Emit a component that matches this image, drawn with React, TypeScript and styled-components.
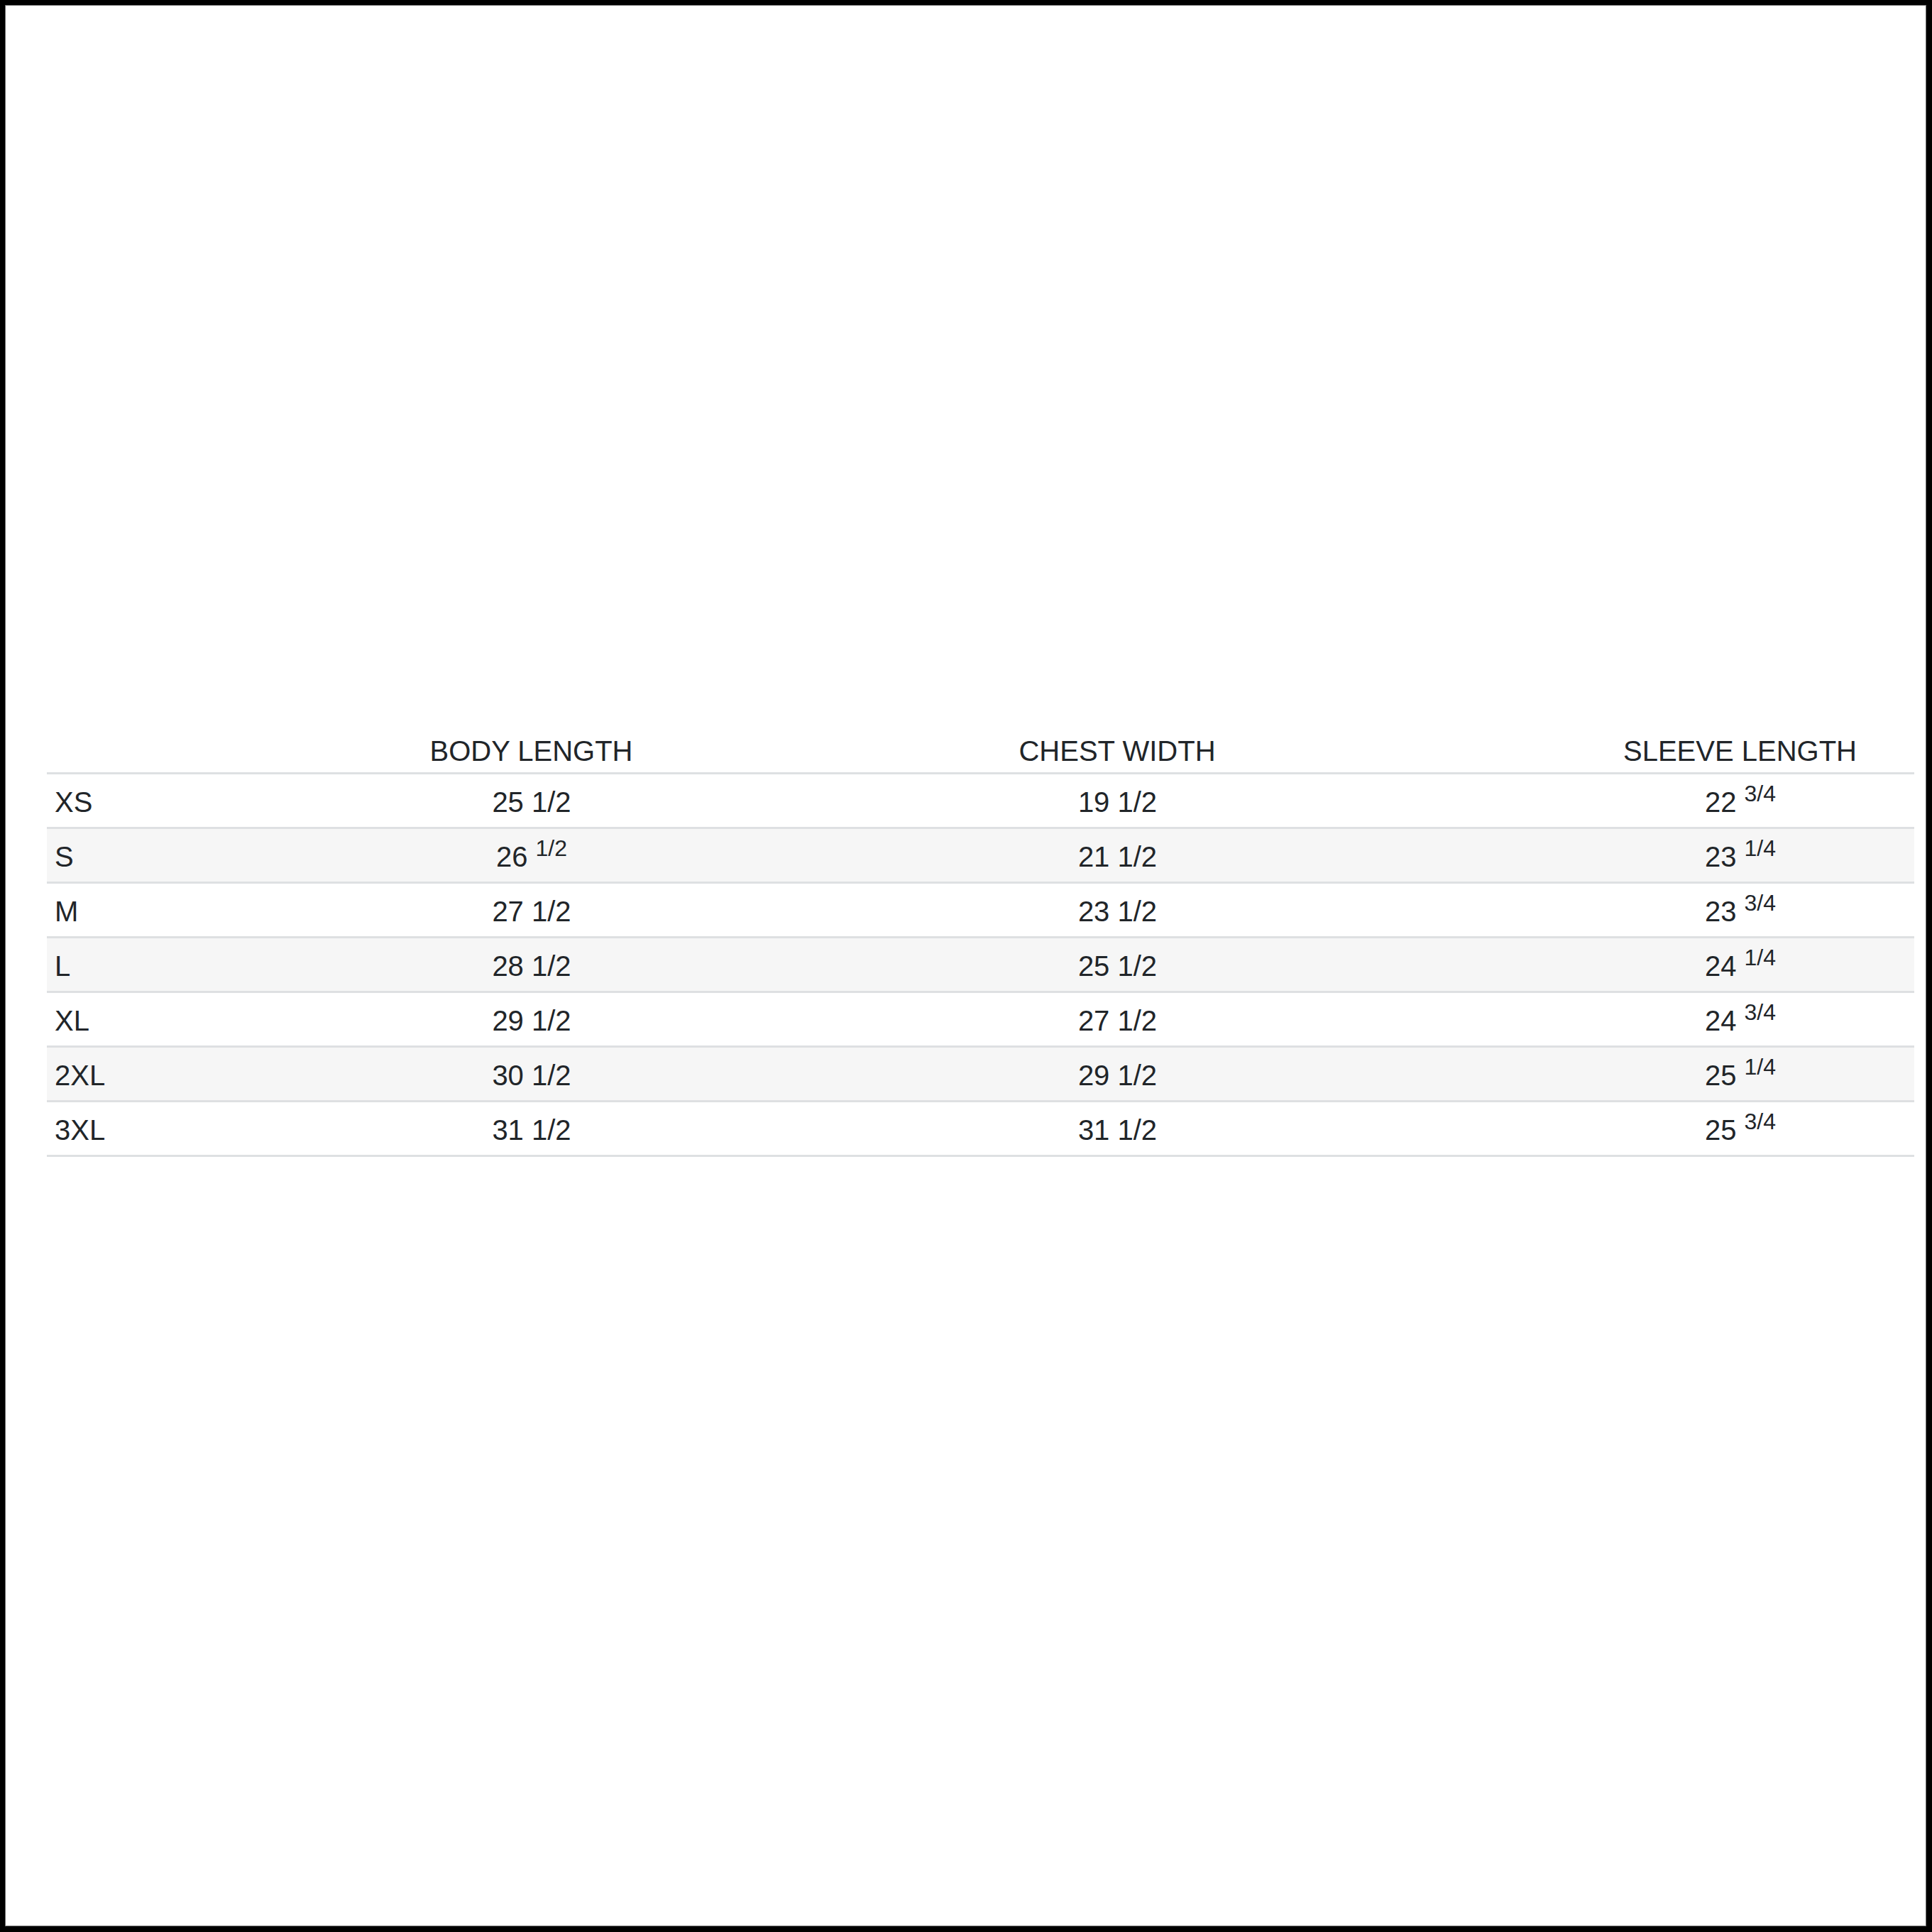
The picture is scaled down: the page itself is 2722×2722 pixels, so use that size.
import styled, { createGlobalStyle } from "styled-components";

const GlobalStyle = createGlobalStyle`
  html, body {
    margin: 0;
    padding: 0;
    background: #ffffff;
  }
  body {
    font-family: "Liberation Sans", Arial, Helvetica, sans-serif;
    color: #212529;
  }
`;

const Frame = styled.div`
  box-sizing: border-box;
  width: 2722px;
  height: 2722px;
  border-style: solid;
  border-color: #000;
  border-width: 7px 8px 8px 7px;
  box-shadow: inset 0 0 0 1px #6e6e6e;
  background: #fff;
  padding: 1015px 17px 0 59px;
`;

const Table = styled.table`
  width: 2631px;
  table-layout: fixed;
  border-collapse: collapse;
  font-size: 40px;
  line-height: 48px;
  color: #212529;
`;

const HeadCell = styled.th`
  font-weight: 400;
  text-align: center;
  padding: 12px 10px 6px;
  border-bottom: 3px solid #dee0e2;
  white-space: nowrap;
`;

const Row = styled.tr<{ $striped: boolean }>`
  background: ${({ $striped }) => ($striped ? "#f6f6f6" : "#ffffff")};
  border-bottom: 3px solid #dee0e2;
`;

const Cell = styled.td<{ $align?: "left" | "center" }>`
  text-align: ${({ $align }) => $align ?? "center"};
  padding: 15px 10px 11px 11px;
  white-space: nowrap;
`;

const Fraction = styled.sup`
  font-size: 32px;
  vertical-align: baseline;
  position: relative;
  top: -15px;
  line-height: 0;
`;

interface Measure {
  whole: number;
  frac: string;
  raised?: boolean;
}

interface SizeRow {
  size: string;
  body: Measure;
  chest: Measure;
  sleeve: Measure;
}

const rows: SizeRow[] = [
  { size: "XS", body: { whole: 25, frac: "1/2" }, chest: { whole: 19, frac: "1/2" }, sleeve: { whole: 22, frac: "3/4", raised: true } },
  { size: "S", body: { whole: 26, frac: "1/2", raised: true }, chest: { whole: 21, frac: "1/2" }, sleeve: { whole: 23, frac: "1/4", raised: true } },
  { size: "M", body: { whole: 27, frac: "1/2" }, chest: { whole: 23, frac: "1/2" }, sleeve: { whole: 23, frac: "3/4", raised: true } },
  { size: "L", body: { whole: 28, frac: "1/2" }, chest: { whole: 25, frac: "1/2" }, sleeve: { whole: 24, frac: "1/4", raised: true } },
  { size: "XL", body: { whole: 29, frac: "1/2" }, chest: { whole: 27, frac: "1/2" }, sleeve: { whole: 24, frac: "3/4", raised: true } },
  { size: "2XL", body: { whole: 30, frac: "1/2" }, chest: { whole: 29, frac: "1/2" }, sleeve: { whole: 25, frac: "1/4", raised: true } },
  { size: "3XL", body: { whole: 31, frac: "1/2" }, chest: { whole: 31, frac: "1/2" }, sleeve: { whole: 25, frac: "3/4", raised: true } },
];

const Value = ({ m }: { m: Measure }) =>
  m.raised ? (
    <>
      {m.whole} <Fraction>{m.frac}</Fraction>
    </>
  ) : (
    <>
      {m.whole} {m.frac}
    </>
  );

const App = () => (
  <>
    <GlobalStyle />
    <Frame>
      <Table>
        <colgroup>
          <col style={{ width: 489 }} />
          <col style={{ width: 387 }} />
          <col style={{ width: 1264 }} />
          <col style={{ width: 491 }} />
        </colgroup>
        <thead>
          <tr>
            <HeadCell />
            <HeadCell>BODY LENGTH</HeadCell>
            <HeadCell>CHEST WIDTH</HeadCell>
            <HeadCell>SLEEVE LENGTH</HeadCell>
          </tr>
        </thead>
        <tbody>
          {rows.map((r, i) => (
            <Row key={r.size} $striped={i % 2 === 1}>
              <Cell $align="left">{r.size}</Cell>
              <Cell>
                <Value m={r.body} />
              </Cell>
              <Cell>
                <Value m={r.chest} />
              </Cell>
              <Cell>
                <Value m={r.sleeve} />
              </Cell>
            </Row>
          ))}
        </tbody>
      </Table>
    </Frame>
  </>
);

export default App;
